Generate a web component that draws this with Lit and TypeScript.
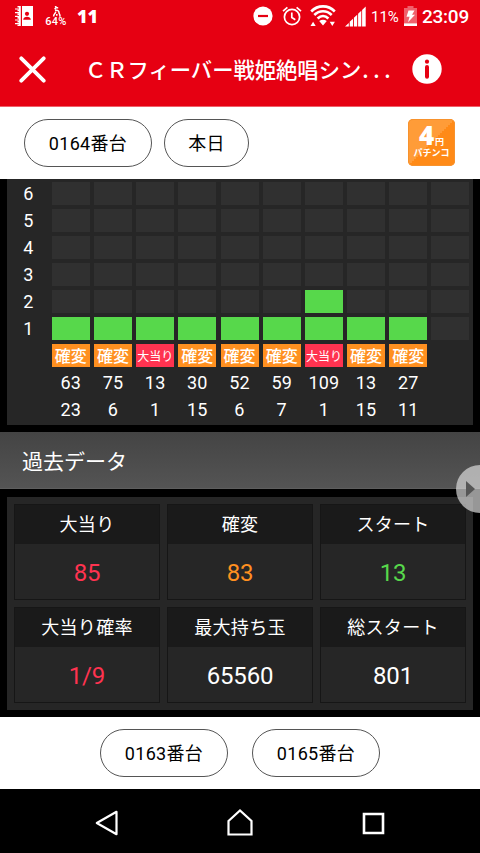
import { LitElement, html, css } from "lit";
import { customElement } from "lit/decorators.js";
import { classMap } from "lit/directives/class-map.js";

type Kind = "kakuhen" | "oatari";
interface Hit { bars: number; kind: Kind; spins: number; no: number; }

const HITS: Hit[] = [
  { bars: 1, kind: "kakuhen", spins: 63, no: 23 },
  { bars: 1, kind: "kakuhen", spins: 75, no: 6 },
  { bars: 1, kind: "oatari", spins: 13, no: 1 },
  { bars: 1, kind: "kakuhen", spins: 30, no: 15 },
  { bars: 1, kind: "kakuhen", spins: 52, no: 6 },
  { bars: 1, kind: "kakuhen", spins: 59, no: 7 },
  { bars: 2, kind: "oatari", spins: 109, no: 1 },
  { bars: 1, kind: "kakuhen", spins: 13, no: 15 },
  { bars: 1, kind: "kakuhen", spins: 27, no: 11 },
];
const COLUMNS = 10;
const LEVELS = [6, 5, 4, 3, 2, 1];
const CARDS = [
  { title: "大当り", value: "85", tone: "pink" },
  { title: "確変", value: "83", tone: "orange" },
  { title: "スタート", value: "13", tone: "green" },
  { title: "大当り確率", value: "1/9", tone: "pink" },
  { title: "最大持ち玉", value: "65560", tone: "white" },
  { title: "総スタート", value: "801", tone: "white" },
];

@customElement("status-bar")
class StatusBar extends LitElement {
  static styles = css`
    :host { display: flex; align-items: center; height: 32px; color: #fff; font-family: Roboto, "Noto Sans CJK JP", sans-serif; }
    svg { display: block; flex: none; fill: #fff; }
    .book { margin-left: 15px; }
    .temp { margin-left: 12px; width: 22px; display: flex; flex-direction: column; align-items: center; }
    .pct { font: 500 11px/10px Roboto, sans-serif; letter-spacing: .3px; }
    .count { font: 800 18px/32px "Open Sans", "Noto Sans", sans-serif; margin-left: 10px; }
    .right { margin-left: auto; display: flex; align-items: center; padding-right: 11px; }
    .dnd { margin-right: 9px; }
    .alarm { margin-right: 8px; }
    .wifi { margin-right: 9px; }
    .level { font-size: 15px; width: 28px; margin-left: 5px; white-space: nowrap; padding-top: 1px; }
    .battery { margin: 0 5px 0 5px; }
    .clock { font-size: 19px; font-weight: 500; width: 47px; white-space: nowrap; letter-spacing: -.25px; }
  `;
  render() {
    return html`
      <svg class="book" width="18" height="20" viewBox="0 0 18 20">
        <path d="M7 0h11v20H7zM2.500 0h3.300v20H2.500z"/>
        <path d="M0 2.500h4M0 6.200h4M0 10h4M0 13.800h4M0 17.500h4" stroke="#e60012" stroke-width="2"/>
        <path d="M0 3h4M0 6.700h4M0 10.400h4M0 14h4M0 17.700h4" stroke="#fff" stroke-width="1.200"/>
        <circle cx="12" cy="7.800" r="2.100" fill="#e60012"/><path d="M8.200 13.800c0-4 7.600-4 7.600 0z" fill="#e60012"/>
      </svg>
      <div class="temp">
        <svg width="9" height="11" viewBox="0 0 9 11"><path d="M3.200 0l1 1.200-1.500 2M4.200 1.800h2M3 4.500c3-1 4 1 4 2.200s1.800 2.400.6 4M3.600 5.600C4 7.400 1.600 7.600 1.600 10.600M4.800 8v1.800" fill="none" stroke="#fff" stroke-width="1.500"/></svg>
        <span class="pct">64%</span>
      </div>
      <span class="count">11</span>
      <div class="right">
        <svg class="dnd" width="20" height="20" viewBox="0 0 20 20"><circle cx="10" cy="10" r="9.600"/><path d="M5 10h10" stroke="#e60012" stroke-width="2.200"/></svg>
        <svg class="alarm" width="20" height="20" viewBox="0 0 20 20"><circle cx="10" cy="11" r="7.600" fill="none" stroke="#fff" stroke-width="1.700"/><path d="M9.800 6.500v5l3.500 2.200M1 5.200L5.400 1.400M19 5.200l-4.400-3.800" fill="none" stroke="#fff" stroke-width="1.700"/></svg>
        <svg class="wifi" width="26" height="22" viewBox="0 0 26 22">
          <path d="M1.200 6.500C7.800-.3 18.200-.3 24.800 6.500M4.300 10C9.400 5 16.600 5 21.700 10M7.600 13.500c3.300-3.200 7.500-3.200 10.800 0" fill="none" stroke="#fff" stroke-width="2.600"/>
          <path d="M9.200 16q3.800-2.500 7.600 0L13 20.500zM.5 21h5.200L3.100 16.800zM19.700 16.800h5.200L22.300 21z"/>
        </svg>
        <svg width="21" height="21" viewBox="0 0 21 21"><path d="M0 20.500l3.800-3.600v3.600zM4.700 15.700l3.300-2.900v7.700H4.700zM8.900 11.700l3.300-2.900v11.700H8.900zM13.100 7.700l3.200-2.900v15.700h-3.200zM17.100 3.900l3.600-3.500v20.100h-3.600z"/></svg>
        <span class="level">11%</span>
        <svg class="battery" width="13" height="20" viewBox="0 0 13 20"><path d="M3.500 0h6v2H13v16H0V2h3.500z" fill="#f0606c"/><path d="M0 17.400h13V20H0z"/><path d="M4.500 4.500h6L8 8.800h3L4 16.200l1.600-5.400H2.500z"/></svg>
        <span class="clock">23:09</span>
      </div>`;
  }
}

@customElement("hit-chart")
class HitChart extends LitElement {
  static styles = css`
    :host { display: grid; grid-template-columns: 40.600px repeat(10, 38px); grid-auto-rows: 23px; gap: 4px 4.200px;
      margin: 0 7px; height: 242.500px; padding-top: 3px; background: #262626; color: #fff;
      font: 18px/23px Roboto, "Noto Sans CJK JP", sans-serif; letter-spacing: .200px; text-align: center; box-sizing: content-box; }
    .axis { padding-left: 2px; }
    .cell { background: #303030; }
    .on { background: #57d84b; }
    .tag { font: 500 16px/23px "Noto Sans CJK JP", sans-serif; letter-spacing: 0; white-space: nowrap; overflow: hidden; }
    .kakuhen { background: #ff9020; }
    .oatari { background: #ff3350; font-size: 12px; font-weight: 400; }
    .num { white-space: nowrap; }
  `;
  render() {
    const cols = Array.from({ length: COLUMNS }, (_, i) => HITS[i]);
    return html`
      ${LEVELS.map((level) => html`<span class="axis">${level}</span>
        ${cols.map((h) => html`<span class=${classMap({ cell: true, on: !!h && h.bars >= level })}></span>`)}`)}
      <span></span>${cols.map((h) => h ? html`<span class="tag ${h.kind}">${h.kind === "kakuhen" ? "確変" : "大当り"}</span>` : html`<span></span>`)}
      <span></span>${cols.map((h) => html`<span class="num">${h?.spins}</span>`)}
      <span></span>${cols.map((h) => html`<span class="num">${h?.no}</span>`)}`;
  }
}

@customElement("stat-cards")
class StatCards extends LitElement {
  static styles = css`
    :host { display: grid; grid-template-columns: repeat(3, 146px); grid-auto-rows: 96px; gap: 7px; justify-content: center;
      margin: 8px 7px 0; padding: 7px 0; height: 199px; background: #262626; text-align: center; color: #fff; }
    .card { border: 1px solid #161616; box-sizing: border-box; }
    .title { height: 39px; background: #1a1a1a; font: 400 18px/40px Roboto, "Noto Sans CJK JP", sans-serif; letter-spacing: .300px; }
    .value { font: 24px/59px Roboto, sans-serif; height: 55px; letter-spacing: -.150px; }
    .pink { color: #ff3350; } .orange { color: #ff9020; } .green { color: #57d84b; }
  `;
  render() {
    return html`${CARDS.map((c) => html`<div class="card"><div class="title">${c.title}</div><div class="value ${c.tone}">${c.value}</div></div>`)}`;
  }
}

@customElement("app-root")
class AppRoot extends LitElement {
  static styles = css`
    :host { display: flex; flex-direction: column; position: relative; width: 480px; height: 853px; overflow: hidden; background: #000;
      font-family: Roboto, "Noto Sans CJK JP", sans-serif; }
    svg { display: block; flex: none; }
    .header { height: 107px; background: linear-gradient(#e60012 106px, #f0606a 106px); color: #fff; }
    .bar { display: flex; align-items: center; height: 74px; }
    .close { margin-left: 19px; }
    .title { margin: 0 0 1px 39px; width: 310px; font: 500 21.300px/32px "Noto Sans CJK JP", sans-serif; white-space: nowrap; }
    .dots { letter-spacing: 4.600px; margin-left: 1px; }
    .info { margin-left: 17px; }
    .filters { display: flex; align-items: center; height: 72px; background: #fff; padding: 0 25px 0 24px; gap: 12px; }
    .pill { box-sizing: border-box; width: 128px; height: 48px; border: 1px solid #555; border-radius: 24px; background: #fff; color: #000;
      font: 18px/46px Roboto, "Noto Sans CJK JP", sans-serif; letter-spacing: .300px; text-align: center; padding: 1px 0 0; }
    .today { width: 85px; }
    .rate { box-sizing: border-box; margin: 0 0 2px auto; width: 47px; height: 47px; border-radius: 5px; color: #fff; text-align: center;
      background: linear-gradient(135deg, #ff9c38 50%, #ff8a17 50%); box-shadow: inset 0 0 0 1px #f7922d; padding-top: 4px; }
    .price { display: flex; align-items: baseline; justify-content: center; gap: 1px; height: 25px; font: 800 26px/24px "Open Sans", sans-serif; }
    .yen { font: 700 9px/10px "Noto Sans CJK JP", sans-serif; }
    .kind { font: 700 9px/10px "Noto Sans CJK JP", sans-serif; white-space: nowrap; }
    .section { margin: 7.500px 0 0; height: 57px; box-sizing: border-box; padding-left: 22px; background: linear-gradient(#444, #545454); color: #fff;
      font: 400 21px/57px "Noto Sans CJK JP", sans-serif; border-bottom: 1px solid #5e5e5e; }
    .neighbors { display: flex; align-items: center; justify-content: center; gap: 24px; height: 72px; margin-top: 7px; background: #fff; }
    .nav { display: flex; align-items: center; height: 64px; background: #000; padding-top: 4px; box-sizing: border-box; }
    .back { margin-left: 94px; }
    .home { margin-left: 108px; }
    .recent { margin-left: 108px; }
    .next { position: absolute; left: 456px; top: 464.500px; width: 48px; height: 48px; border-radius: 50%; background: rgba(222, 222, 222, .68); }
    .arrow { margin: 16px 0 0 10px; }
  `;
  render() {
    return html`
      <header class="header">
        <status-bar></status-bar>
        <div class="bar">
          <svg class="close" width="27" height="27" viewBox="0 0 27 27"><path d="M2.300 2.300l22.400 22.400M24.700 2.300L2.300 24.700" stroke="#fff" stroke-width="3.800" stroke-linecap="round"/></svg>
          <h1 class="title">ＣＲフィーバー戦姫絶唱シン<span class="dots">...</span></h1>
          <svg class="info" width="30" height="30" viewBox="0 0 30 30"><circle cx="15" cy="15" r="14.700" fill="#fff"/><circle cx="15" cy="7.700" r="2.100" fill="#e60012"/><path d="M15 13v9.800" stroke="#e60012" stroke-width="4" stroke-linecap="round"/></svg>
        </div>
      </header>
      <div class="filters">
        <button class="pill">0164番台</button>
        <button class="pill today">本日</button>
        <div class="rate"><div class="price">4<span class="yen">円</span></div><div class="kind">パチンコ</div></div>
      </div>
      <hit-chart></hit-chart>
      <h2 class="section">過去データ</h2>
      <stat-cards></stat-cards>
      <div class="neighbors"><button class="pill">0163番台</button><button class="pill">0165番台</button></div>
      <nav class="nav">
        <svg class="back" width="24" height="26" viewBox="0 0 24 26"><path d="M2.800 13L22.500 1.800v22.400z" fill="none" stroke="#fff" stroke-width="2.200" stroke-linejoin="round"/></svg>
        <svg class="home" width="28" height="28" viewBox="0 0 28 28"><path d="M2.500 12L14 1.500 25.500 12v13.500h-23z" fill="none" stroke="#fff" stroke-width="2.200"/></svg>
        <svg class="recent" width="23" height="23" viewBox="0 0 23 23"><path d="M2 2h19v19H2z" fill="none" stroke="#fff" stroke-width="2.600"/></svg>
      </nav>
      <div class="next"><svg class="arrow" width="10" height="16" viewBox="0 0 10 16"><path d="M0 0l9 8-9 8z" fill="#555"/></svg></div>`;
  }
}
